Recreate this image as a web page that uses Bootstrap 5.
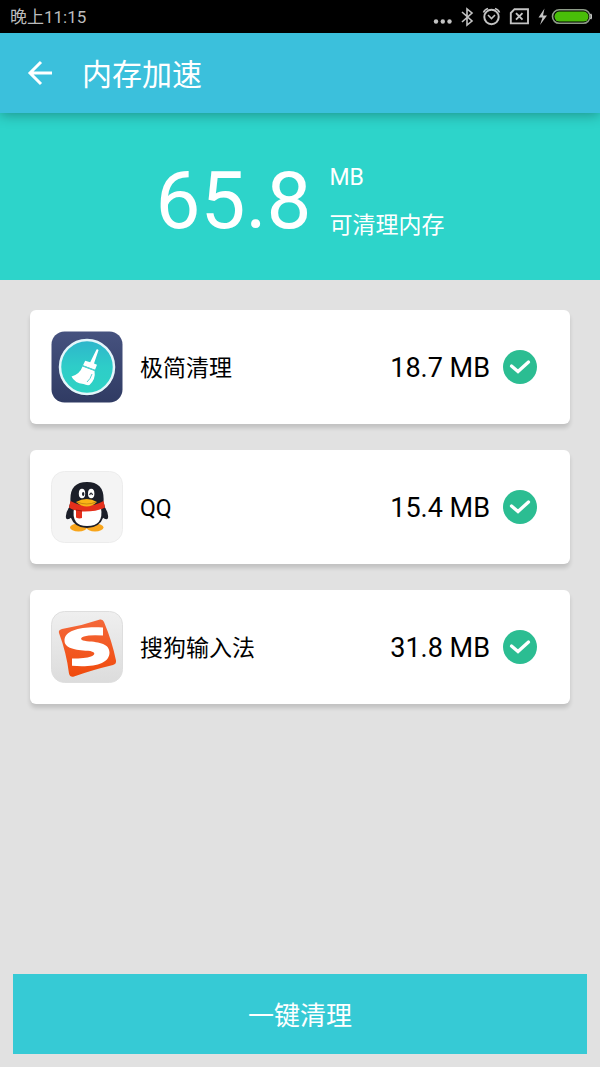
<!DOCTYPE html>
<html lang="zh-CN">
<head>
<meta charset="utf-8">
<meta name="viewport" content="width=device-width, initial-scale=1">
<title>内存加速</title>
<link href="https://cdn.jsdelivr.net/npm/bootstrap@5.3.0/dist/css/bootstrap.min.css" rel="stylesheet">
<style>
  body { background: #e1e1e1; color: #000; font-family: Roboto, "Noto Sans CJK SC", sans-serif; }
  .status-bar { height: 33px; padding: 0 8px 0 10px; background: #000; color: #bdbdbd; font-size: 17px; line-height: 24px; }
  .app-bar { height: 80px; padding: 0 24px; background: #3bc0dc; box-shadow: 0 2px 12px rgba(0, 0, 0, .3); z-index: 1; }
  .back-link { width: 32px; height: 32px; margin-right: 26px; }
  .app-title { padding-top: 4px; font-size: 30px; line-height: 40px; }
  .summary { height: 167px; padding-top: 8px; gap: 18px; background: #2dd4ca; }
  .total { font-size: 80px; line-height: 80px; }
  .summary-notes { padding-top: 2px; font-size: 23px; line-height: 28px; gap: 20px; }
  .app-list { padding: 30px 30px 0; gap: 26px; }
  .app-row { height: 114px; padding: 0 33px 0 21px; border-radius: 6px; box-shadow: 0 4px 4px rgba(0, 0, 0, .14); }
  .app-name { padding-top: 4px; margin-left: 17px; font-size: 23px; line-height: 32px; }
  .app-size { padding-top: 2px; margin-right: 13px; font-size: 27px; line-height: 32px; }
  .app-row .form-check-input { width: 34px; height: 34px; border: 0; border-radius: 50%; background-color: #ddd; }
  .app-row .form-check-input:checked {
    background-color: #2bbd92;
    background-size: 100% 100%;
    background-image: url("data:image/svg+xml,%3Csvg xmlns='http://www.w3.org/2000/svg' viewBox='0 0 34 34'%3E%3Cpath d='M8.500 16l6.500 5.500 10.500-9.500' fill='none' stroke='white' stroke-width='3.300' stroke-linecap='round' stroke-linejoin='miter'/%3E%3C/svg%3E");
  }
  .action-area { padding: 14px 13px 13px; }
  .clean-btn { height: 80px; padding: 10px 12px 6px; background: #36cad5; color: #fff; font-size: 26px; line-height: 36px; }
  .clean-btn:hover, .clean-btn:active { background: #2fb9c4; color: #fff; }
</style>
</head>
<body class="d-flex flex-column min-vh-100">

<div class="status-bar d-flex align-items-center justify-content-between">
  <span>晚上11:15</span>
  <svg width="162" height="26" viewBox="430 4 162 26" fill="none" stroke="#c4c4c4" stroke-width="1.6" aria-hidden="true">
    <g fill="#c4c4c4" stroke="none"><circle cx="436" cy="21.500" r="2.200"/><circle cx="442.800" cy="21.500" r="2.200"/><circle cx="449.500" cy="21.500" r="2.200"/></g>
    <path d="M462 12l10 9-5 4V9l5 4-10 9"/>
    <circle cx="491.500" cy="17" r="7.200" stroke-width="2"/><path d="M488 15l3.500 3.500 3.500-3.500M483.500 12.500q1-3 4.500-4M499.500 12.500q-1-3-4.500-4"/>
    <path d="M514.500 9.200h13.500v14.200h-17.200V13zM516 13.200l6.500 6.500M522.500 13.200l-6.500 6.500" stroke-width="1.900"/>
    <path d="M544.500 8.500l-6 9h4l-2.500 7.500 7-9.500h-4z" fill="#c4c4c4" stroke="none"/>
    <rect x="552.500" y="9.800" width="37.500" height="13.500" rx="6.700" stroke="#8e9c88"/>
    <rect x="554.500" y="11.600" width="34" height="10" rx="5" fill="#49be09" stroke="none"/>
    <path d="M590.500 14q2 2.500 0 5"/>
  </svg>
</div>

<header class="app-bar position-relative d-flex align-items-center text-white">
  <a class="back-link d-flex text-white" href="#" aria-label="返回">
    <svg width="32" height="32" viewBox="0 0 32 32" fill="none" stroke="currentColor" stroke-width="3"><path d="M28 16H6M17 5L6 16l11 11"/></svg>
  </a>
  <h1 class="app-title fw-normal mb-0">内存加速</h1>
</header>

<section class="summary d-flex align-items-center justify-content-center text-white">
  <div class="total">65.8</div>
  <div class="summary-notes d-flex flex-column">
    <span>MB</span>
    <span>可清理内存</span>
  </div>
</section>

<main class="app-list d-flex flex-column flex-grow-1">
  <label class="app-row d-flex align-items-center bg-white" for="app-cleaner">
    <svg width="72" height="72" viewBox="0 0 72 72" aria-hidden="true">
      <defs>
        <linearGradient id="navy" x2="0" y2="1"><stop stop-color="#46527f"/><stop offset="1" stop-color="#303b63"/></linearGradient>
        <linearGradient id="teal" x2="0" y2="1"><stop stop-color="#2eb5cb"/><stop offset=".5" stop-color="#2ecdc8"/><stop offset="1" stop-color="#2ed3c4"/></linearGradient>
      </defs>
      <rect x=".5" y=".5" width="71" height="71" rx="13" fill="url(#navy)"/>
      <circle cx="36" cy="37" r="28" fill="#273256"/>
      <circle cx="36" cy="36" r="27" fill="url(#teal)" stroke="#e4f6fb" stroke-width="2.500"/>
      <path d="M45.500 18.500q1.500-.5 2 .8L43 32.500l3 1.200-2 5-12-4.500 2.200-4.500 5 1.500z" fill="#fff"/>
      <path d="M31.500 35.500L43.500 40q1.500 8-5 14-3 .5-6-1-9-1-12-7.500 8.500-2.500 11-10z" fill="#fff"/>
      <path d="M31.500 34.700l12.500 4.700M41 43q-1.500 5-5 8" stroke="#58cfd0" fill="none"/>
    </svg>
    <span class="app-name flex-grow-1">极简清理</span>
    <span class="app-size">18.7 MB</span>
    <input class="form-check-input m-0 flex-shrink-0" type="checkbox" id="app-cleaner" checked>
  </label>

  <label class="app-row d-flex align-items-center bg-white" for="app-qq">
    <svg width="72" height="72" viewBox="0 0 72 72" aria-hidden="true">
      <rect x=".5" y=".5" width="71" height="71" rx="13" fill="#f4f4f4" stroke="#ececec"/>
      <ellipse cx="27.500" cy="56.500" rx="8.500" ry="4" fill="#f8a51b"/><ellipse cx="44" cy="56.500" rx="8.500" ry="4" fill="#f8a51b"/>
      <path d="M20 34q-6 7-5 13 1 3 6-1M52 34q6 7 5 13-1 3-6-1" fill="#1c1f29"/>
      <path d="M19.500 31Q18 11 36 11t16.500 20q3 8 0 15-4 11-16.500 11T19.500 46q-3-8 0-15z" fill="#1c1f29"/>
      <path d="M23 37h27q3 18-14 18-16 0-13-18z" fill="#fff"/>
      <ellipse cx="31" cy="22.500" rx="3.200" ry="4.700" fill="#fff"/><ellipse cx="40.200" cy="22.500" rx="3.200" ry="4.700" fill="#fff"/>
      <ellipse cx="32.200" cy="23" rx="1.200" ry="2" fill="#1c1f29"/><path d="M38.700 24q1.300-4 2.800 0" fill="none" stroke="#1c1f29" stroke-width="1.200"/>
      <path d="M19.500 30q16.500 9 33 0l1.500 6.500Q45 41 31 40.500v6.500q-3 1-6-.5v-7q-4-1-7-3z" fill="#e5301c"/>
      <path d="M25 39l6 1" stroke="#a51c12" fill="none"/>
      <path d="M25 31q11-6 21 0-10 9-21 0z" fill="#fbb416"/><path d="M26 31q10 4 19 0" stroke="#b77b12" stroke-width=".8" fill="none"/>
    </svg>
    <span class="app-name flex-grow-1">QQ</span>
    <span class="app-size">15.4 MB</span>
    <input class="form-check-input m-0 flex-shrink-0" type="checkbox" id="app-qq" checked>
  </label>

  <label class="app-row d-flex align-items-center bg-white" for="app-sogou">
    <svg width="72" height="72" viewBox="0 0 72 72" aria-hidden="true">
      <defs>
        <linearGradient id="silver" x2="0" y2="1"><stop stop-color="#efefef"/><stop offset="1" stop-color="#dcdcdc"/></linearGradient>
        <linearGradient id="orange" x2="0" y2="1"><stop stop-color="#f4683a"/><stop offset="1" stop-color="#f04a0c"/></linearGradient>
      </defs>
      <rect x=".5" y=".5" width="71" height="71" rx="13" fill="url(#silver)" stroke="#dedede"/>
      <path d="M11 18Q30 15 49 8.500q3-.5 4 2.500 8 19 12 38.500.5 3.500-3 4.500-21 5-39 11.500-4 1-5-3Q15.500 42 8 22q-1-3 3-4z" fill="url(#orange)"/>
      <path d="M52 16.500V24.500Q39 23.500 33 25.500C28.500 27 29 29.500 36 30.200C49 31 58.500 33 58.500 41.500C58.500 53 43 56.500 21 54.800V47.500Q34 47.500 40 45.500C45.500 43.500 44 40.500 37 39.800C24 39 13.500 37.500 13.500 29.500C13.500 18.500 32 15 52 16.500z" fill="#fff"/>
    </svg>
    <span class="app-name flex-grow-1">搜狗输入法</span>
    <span class="app-size">31.8 MB</span>
    <input class="form-check-input m-0 flex-shrink-0" type="checkbox" id="app-sogou" checked>
  </label>
</main>

<footer class="action-area">
  <button type="button" class="clean-btn btn w-100 rounded-0 border-0">一键清理</button>
</footer>

<script src="https://cdn.jsdelivr.net/npm/bootstrap@5.3.0/dist/js/bootstrap.bundle.min.js"></script>
</body>
</html>
